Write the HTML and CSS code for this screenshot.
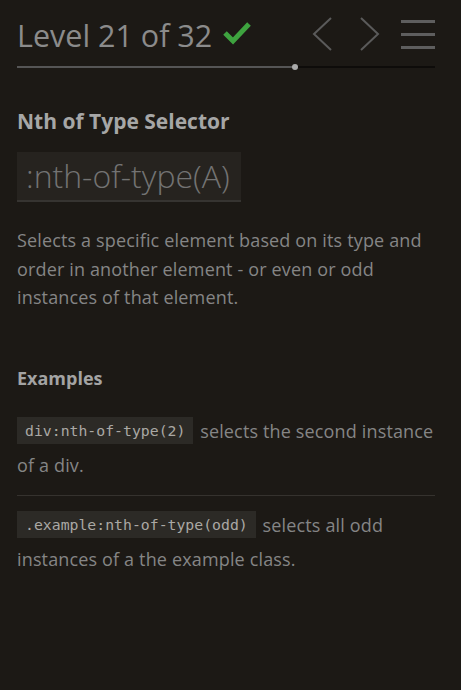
FILE: index.html
```html
<!DOCTYPE html>
<html>
<head>
<meta charset="utf-8">
<link rel="stylesheet" href="styles.css">
</head>
<body>
<div class="page">
  <header class="header">
    <h1 class="level">Level 21 of 32
      <svg class="check" width="28" height="24" viewBox="0 0 28 24"><path d="M2 12 L10 20 L26 3" fill="none" stroke="#3ea33f" stroke-width="5"/></svg>
    </h1>
    <div class="nav">
      <svg class="arrow" width="22" height="34" viewBox="0 0 22 34"><path d="M20 1 L3 17 L20 33" fill="none" stroke="#5a5a5a" stroke-width="2"/></svg>
      <svg class="arrow" width="22" height="34" viewBox="0 0 22 34"><path d="M2 1 L19 17 L2 33" fill="none" stroke="#5a5a5a" stroke-width="2"/></svg>
      <div class="menu"><span></span><span></span><span></span></div>
    </div>
  </header>
  <div class="progress">
    <div class="done"></div>
    <div class="dot"></div>
    <div class="todo"></div>
  </div>

  <h2 class="title">Nth of Type Selector</h2>
  <div class="syntax">:nth-of-type(A)</div>
  <p class="hint">Selects a specific element based on its type and order in another element - or even or odd instances of that element.</p>

  <h3 class="examples-title">Examples</h3>
  <div class="example"><code>div:nth-of-type(2)</code> <span>selects the second instance of a div.</span></div>
  <div class="example last"><code>.example:nth-of-type(odd)</code> <span>selects all odd instances of a the example class.</span></div>
</div>
</body>
</html>
```

FILE: styles.css
```css
html, body {
  margin: 0;
  padding: 0;
  background: #1c1915;
}
body {
  font-family: "Open Sans", Lato, sans-serif;
  color: #8a8886;
}
.page {
  width: 418px;
  padding: 0 0 0 17px;
}
.header {
  display: flex;
  align-items: center;
  justify-content: space-between;
  height: 64px;
  padding-top: 6px;
  box-sizing: border-box;
}
.level {
  margin: 0;
  font-size: 30.5px;
  line-height: 40px;
  font-weight: 400;
  color: #8b8b8b;
  display: flex;
  align-items: center;
  gap: 11px;
}
.check { margin-top: -4px; }
.nav {
  display: flex;
  align-items: center;
  gap: 26px;
  margin-top: -2px;
}
.arrow { display: block; }
.menu {
  display: flex;
  flex-direction: column;
  gap: 10px;
  width: 34px;
  margin-left: -6px;
}
.menu span {
  display: block;
  height: 3px;
  background: #5e5e5e;
}
.progress {
  display: flex;
  align-items: center;
  height: 6px;
}
.done { width: 276px; height: 2px; background: #555; }
.dot { width: 6px; height: 6px; border-radius: 50%; background: #aaa; margin-left: -1px; }
.todo { flex: 1; height: 2px; background: #0e0c0a; }
.title {
  margin: 39px 0 0;
  font-size: 21px;
  font-weight: 700;
  color: #a6a6a6;
  line-height: 24px;
}
.syntax {
  display: inline-block;
  margin-top: 19px;
  background: #26231f;
  border-bottom: 2px solid #363431;
  color: #737373;
  font-size: 32px;
  line-height: 48px;
  padding: 0 11px 0 9px;
  font-weight: 300;
}
.hint {
  margin: 24px 0 0;
  font-size: 18px;
  letter-spacing: 0.15px;
  line-height: 28.5px;
  color: #858585;
}
.examples-title {
  margin: 54px 0 0;
  font-size: 18px;
  line-height: 24px;
  font-weight: 700;
  color: #a3a3a3;
}
.example {
  margin-top: 24px;
  font-size: 18px;
  letter-spacing: 0.15px;
  line-height: 34px;
  color: #858585;
  padding-bottom: 13px;
  border-bottom: 1px solid #35322e;
}
.example.last { border-bottom: none; margin-top: 12.5px; }
code {
  display: inline-block;
  vertical-align: top;
  margin-top: 3px;
  font-family: "DejaVu Sans Mono", monospace;
  font-size: 14.8px;
  letter-spacing: 0;
  line-height: 27px;
  background: #2c2a26;
  color: #aaa8a4;
  padding: 0 8px;
  margin-right: 2px;
}
```
